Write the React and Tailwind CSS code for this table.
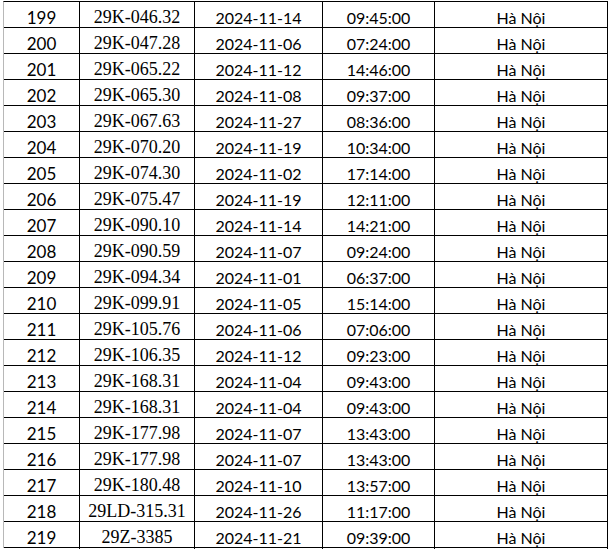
const rows = [
  ["199", "29K-046.32", "2024-11-14", "09:45:00"],
  ["200", "29K-047.28", "2024-11-06", "07:24:00"],
  ["201", "29K-065.22", "2024-11-12", "14:46:00"],
  ["202", "29K-065.30", "2024-11-08", "09:37:00"],
  ["203", "29K-067.63", "2024-11-27", "08:36:00"],
  ["204", "29K-070.20", "2024-11-19", "10:34:00"],
  ["205", "29K-074.30", "2024-11-02", "17:14:00"],
  ["206", "29K-075.47", "2024-11-19", "12:11:00"],
  ["207", "29K-090.10", "2024-11-14", "14:21:00"],
  ["208", "29K-090.59", "2024-11-07", "09:24:00"],
  ["209", "29K-094.34", "2024-11-01", "06:37:00"],
  ["210", "29K-099.91", "2024-11-05", "15:14:00"],
  ["211", "29K-105.76", "2024-11-06", "07:06:00"],
  ["212", "29K-106.35", "2024-11-12", "09:23:00"],
  ["213", "29K-168.31", "2024-11-04", "09:43:00"],
  ["214", "29K-168.31", "2024-11-04", "09:43:00"],
  ["215", "29K-177.98", "2024-11-07", "13:43:00"],
  ["216", "29K-177.98", "2024-11-07", "13:43:00"],
  ["217", "29K-180.48", "2024-11-10", "13:57:00"],
  ["218", "29LD-315.31", "2024-11-26", "11:17:00"],
  ["219", "29Z-3385", "2024-11-21", "09:39:00"],
];

const sans = "font-['Lato','Open_Sans',sans-serif]";
const serif = "font-['Liberation_Serif','Times_New_Roman',serif]";

export default function App() {
  return (
    <div className="w-[610px] h-[549px] bg-white overflow-hidden">
      <div className="ml-[3px] mt-[1px] w-[605px] border-l border-l-[#b8b8b8] border-t border-t-black text-black">
        {rows.map((r) => (
          <div
            key={r[0]}
            className="grid grid-cols-[76px_115px_128px_112px_173px] h-[26px] border-b border-black"
          >
            <div className={`border-r border-black flex items-center justify-center pt-[3px] text-[17px] ${sans}`}>
              {r[0]}
            </div>
            <div className={`border-r border-black flex items-center justify-center pt-[2px] text-[18px] ${serif}`}>
              {r[1]}
            </div>
            <div className={`border-r border-black flex items-center justify-center pt-[3px] text-[16px] ${sans}`}>
              {r[2]}
            </div>
            <div className={`border-r border-black flex items-center justify-center pt-[3px] text-[16px] ${sans}`}>
              {r[3]}
            </div>
            <div className={`border-r border-black flex items-center justify-center pt-[3px] text-[16px] ${sans}`}>
              Hà Nội
            </div>
          </div>
        ))}
      </div>
    </div>
  );
}
